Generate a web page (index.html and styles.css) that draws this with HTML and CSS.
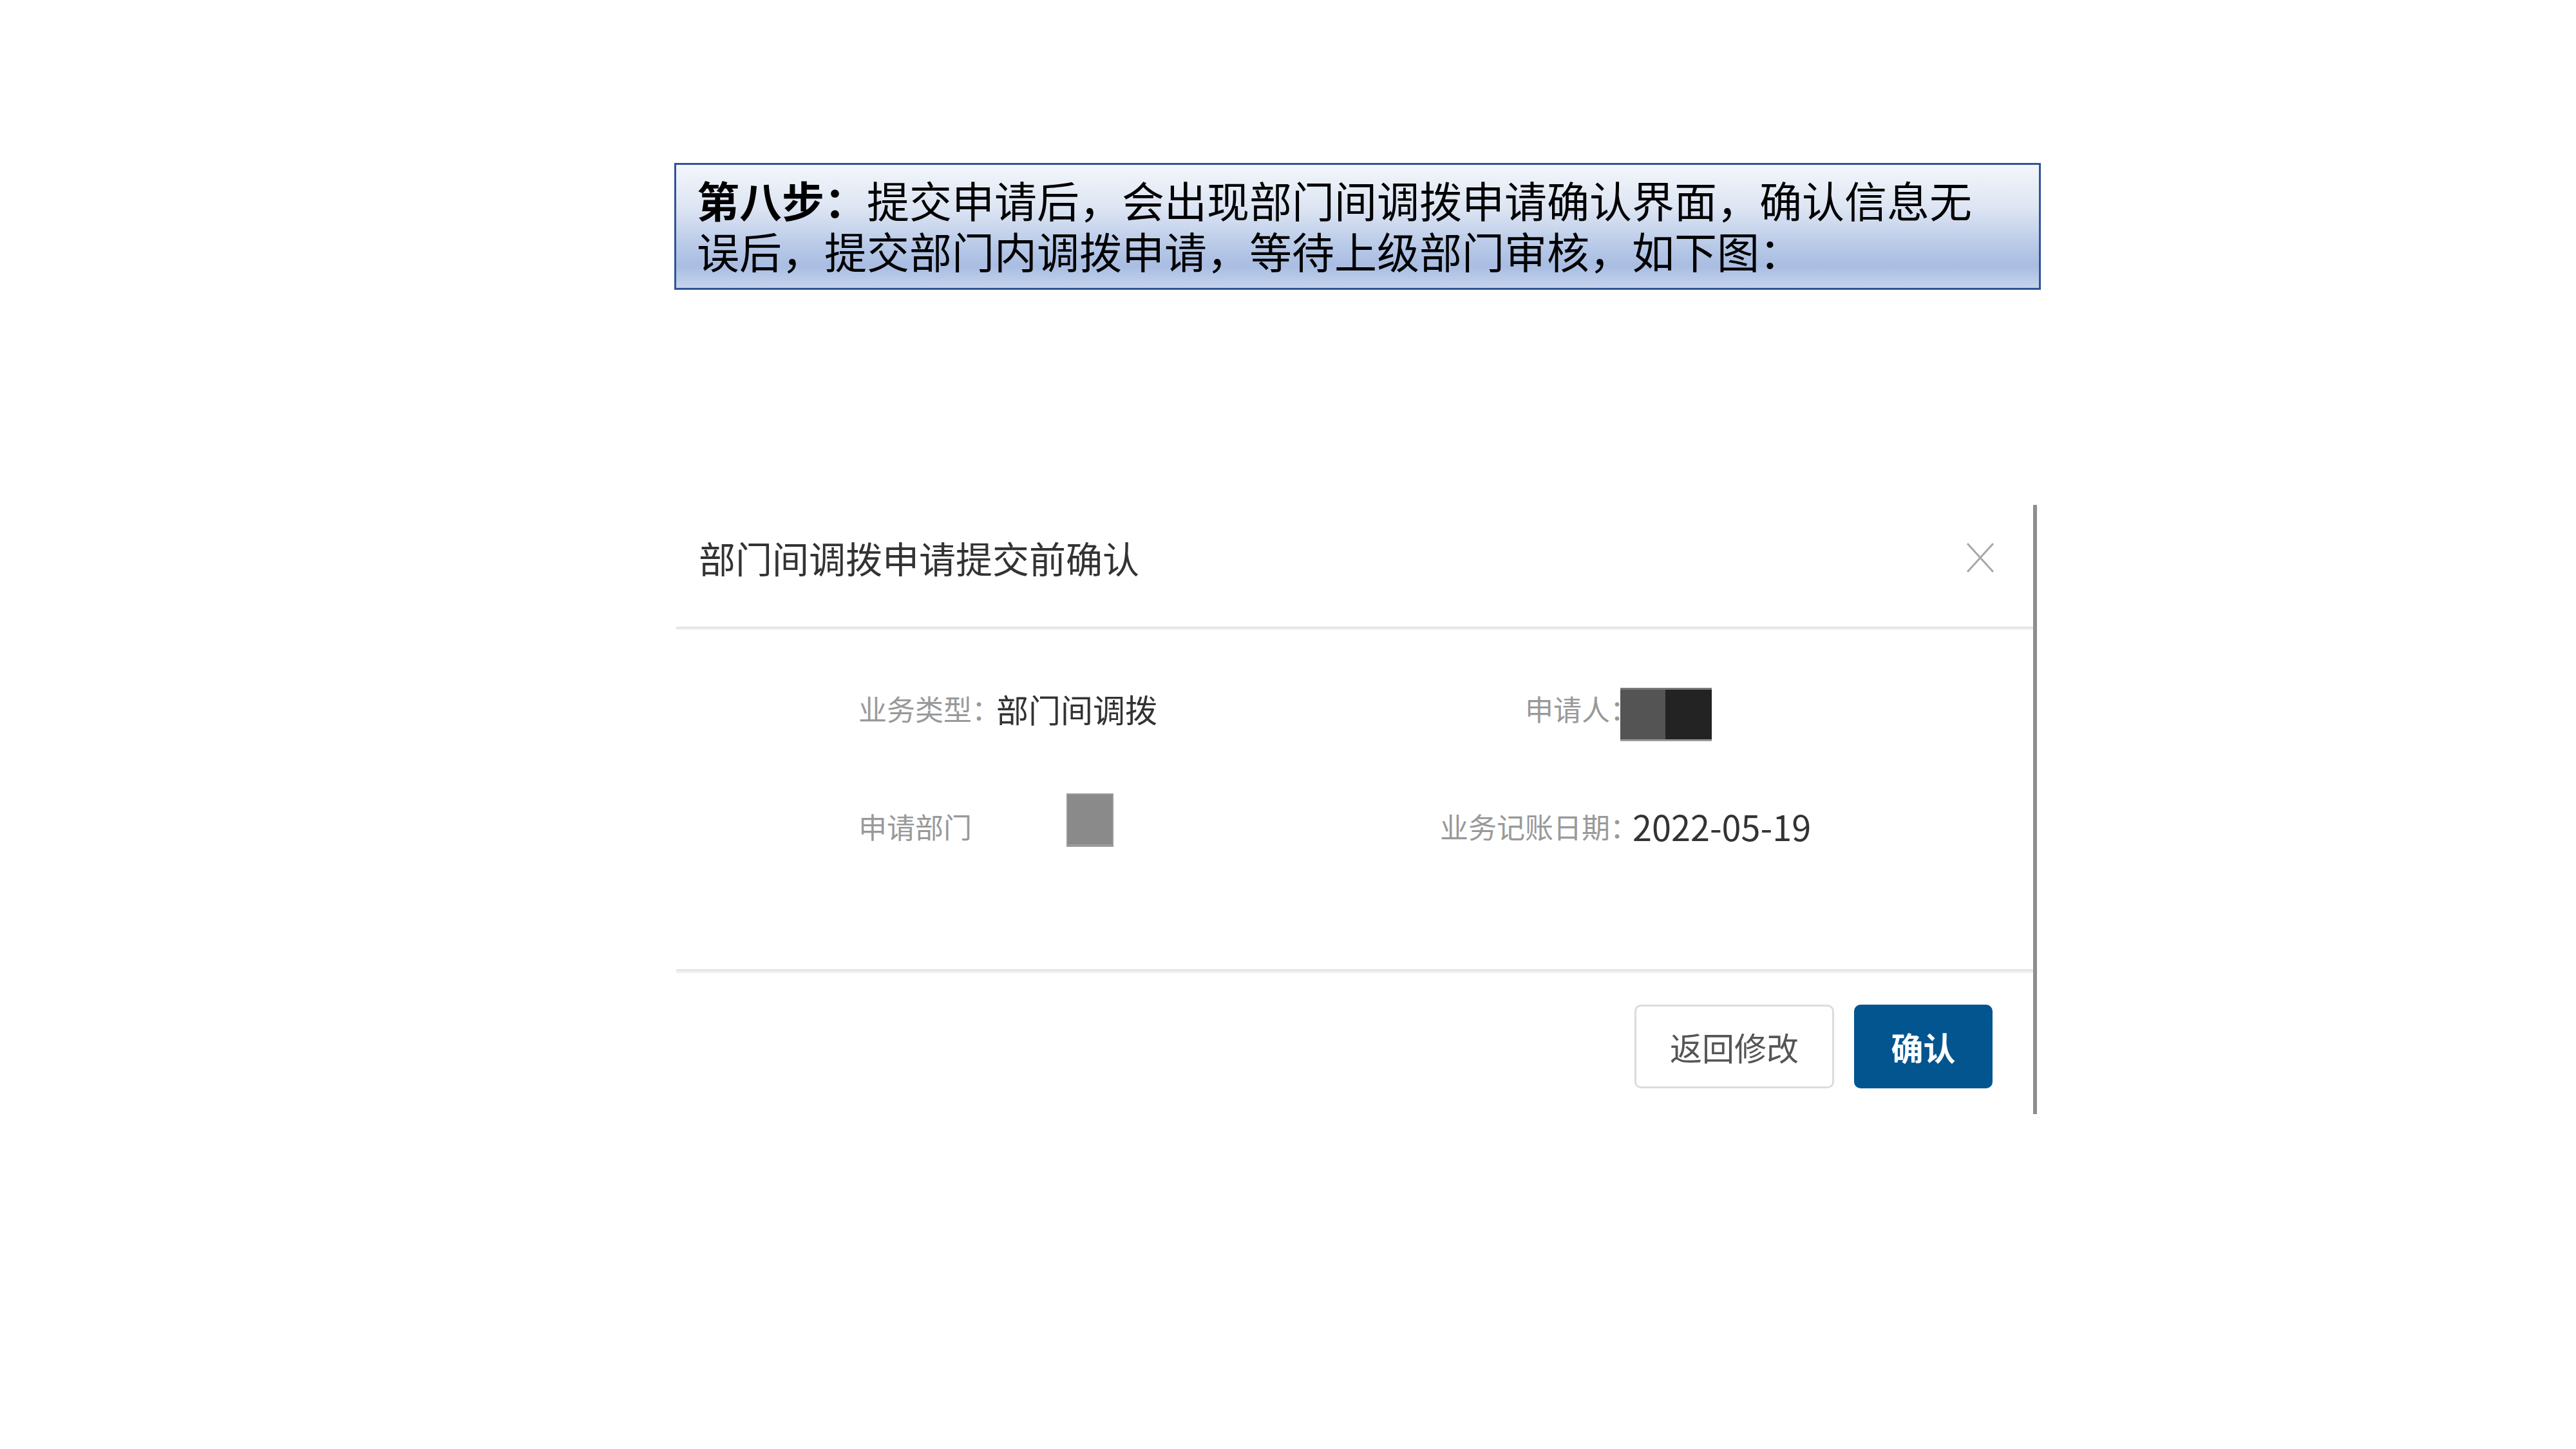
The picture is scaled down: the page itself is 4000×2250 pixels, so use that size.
FILE: index.html
```html
<!DOCTYPE html>
<html lang="zh-CN">
<head>
<meta charset="utf-8">
<title>第八步</title>
<link rel="stylesheet" href="styles.css">
</head>
<body>
<div class="page">
  <div class="step-box">
    <p class="step-text"><strong>第八步：</strong>提交申请后，会出现部门间调拨申请确认界面，确认信息无误后，提交部门内调拨申请，等待上级部门审核，如下图：</p>
  </div>

  <div class="dialog">
    <div class="dialog-header">
      <span class="dialog-title">部门间调拨申请提交前确认</span>
      <svg class="close-icon" viewBox="0 0 44 48" width="44" height="48" aria-hidden="true">
        <path d="M2 2 L42 46 M42 2 L2 46" stroke="#a8a8a8" stroke-width="3" fill="none"/>
      </svg>
    </div>

    <div class="dialog-body">
      <span class="label label-left">业务类型：</span>
      <span class="value">部门间调拨</span>
      <span class="label label-right">申请人：</span>
      <span class="value"><span class="mask-person"></span></span>

      <span class="label label-left">申请部门</span>
      <span class="value"><span class="mask-dept"></span></span>
      <span class="label label-right">业务记账日期：</span>
      <span class="value value-date">2022-05-19</span>
    </div>

    <div class="dialog-footer">
      <button class="btn btn-default">返回修改</button>
      <button class="btn btn-primary">确认</button>
    </div>
  </div>
</div>
</body>
</html>
```
FILE: styles.css
```css
html, body {
  margin: 0;
  padding: 0;
  background: #ffffff;
}

body {
  font-family: "Noto Sans CJK SC", "Noto Sans", sans-serif;
  width: 4000px;
  height: 2250px;
  overflow: hidden;
}

.page {
  padding: 253px 0 0 1047px;
  display: flex;
  flex-direction: column;
  align-items: flex-start;
}

/* Step description box */
.step-box {
  width: 2122px;
  box-sizing: border-box;
  border: 3px solid #2f5597;
  background: linear-gradient(180deg, #f3f6fb 0%, #dde5f3 35%, #b9cae8 65%, #a9bde2 82%, #c5d3ed 100%);
  padding: 14px 60px 19px 32px;
}

.step-text {
  margin: 0;
  font-size: 66px;
  line-height: 79px;
  color: #000;
}

.step-text strong {
  font-weight: 700;
}

/* Dialog */
.dialog {
  margin-top: 334px;
  margin-left: 3px;
  width: 2113px;
  box-sizing: border-box;
  border-right: 6px solid #8e8e8e;
  background: #fff;
  color: #333;
}

.dialog-header {
  height: 192px;
  box-sizing: border-box;
  padding: 0 60px 26px 35px;
  display: flex;
  align-items: center;
  justify-content: space-between;
  border-bottom: 3px solid #e4e4e4;
  box-shadow: 0 2px 0 #f1f1f1;
}

.dialog-title {
  font-size: 57px;
  line-height: 1;
  color: #333;
}

.close-icon {
  display: block;
}

.dialog-body {
  padding: 82px 0 180px 283px;
  display: grid;
  grid-template-columns: 214px 653px 322px auto;
  grid-template-rows: 84px 84px;
  row-gap: 99px;
  align-items: center;
}

.label {
  font-size: 44px;
  line-height: 1;
  color: #999;
  white-space: nowrap;
  font-feature-settings: "halt";
}

.label-right {
  text-align: right;
}

.value {
  font-size: 50px;
  line-height: 1;
  color: #333;
  white-space: nowrap;
  display: flex;
  align-items: center;
}

.value-date {
  padding-left: 13px;
  font-size: 54px;
}

.mask-person {
  display: block;
  width: 142px;
  height: 83px;
  margin-left: -6px;
  margin-top: 18px;
  box-sizing: border-box;
  border-top: 3px solid #7a7a7a;
  border-bottom: 3px solid #9a9a9a;
  background: linear-gradient(90deg, #545454 0 70px, #232323 70px 100%);
}

.mask-dept {
  display: block;
  width: 73px;
  height: 83px;
  margin-left: 109px;
  margin-bottom: 20px;
  box-sizing: border-box;
  border: 2px solid #9a9a9a;
  border-bottom-width: 4px;
  background: #8a8a8a;
}

.dialog-footer {
  border-top: 3px solid #e4e4e4;
  box-shadow: inset 0 3px 0 #f1f1f1;
  padding: 52px 63px 40px 0;
  display: flex;
  justify-content: flex-end;
  gap: 31px;
}

.btn {
  height: 130px;
  box-sizing: border-box;
  border-radius: 10px;
  font-family: "Noto Sans CJK SC", sans-serif;
  font-size: 50px;
  line-height: 1;
  padding: 0;
  cursor: pointer;
}

.btn-default {
  width: 310px;
  border: 3px solid #dcdcdc;
  background: #fff;
  color: #555;
}

.btn-primary {
  width: 215px;
  border: none;
  background: #03558f;
  color: #fff;
  font-weight: 700;
}
```
